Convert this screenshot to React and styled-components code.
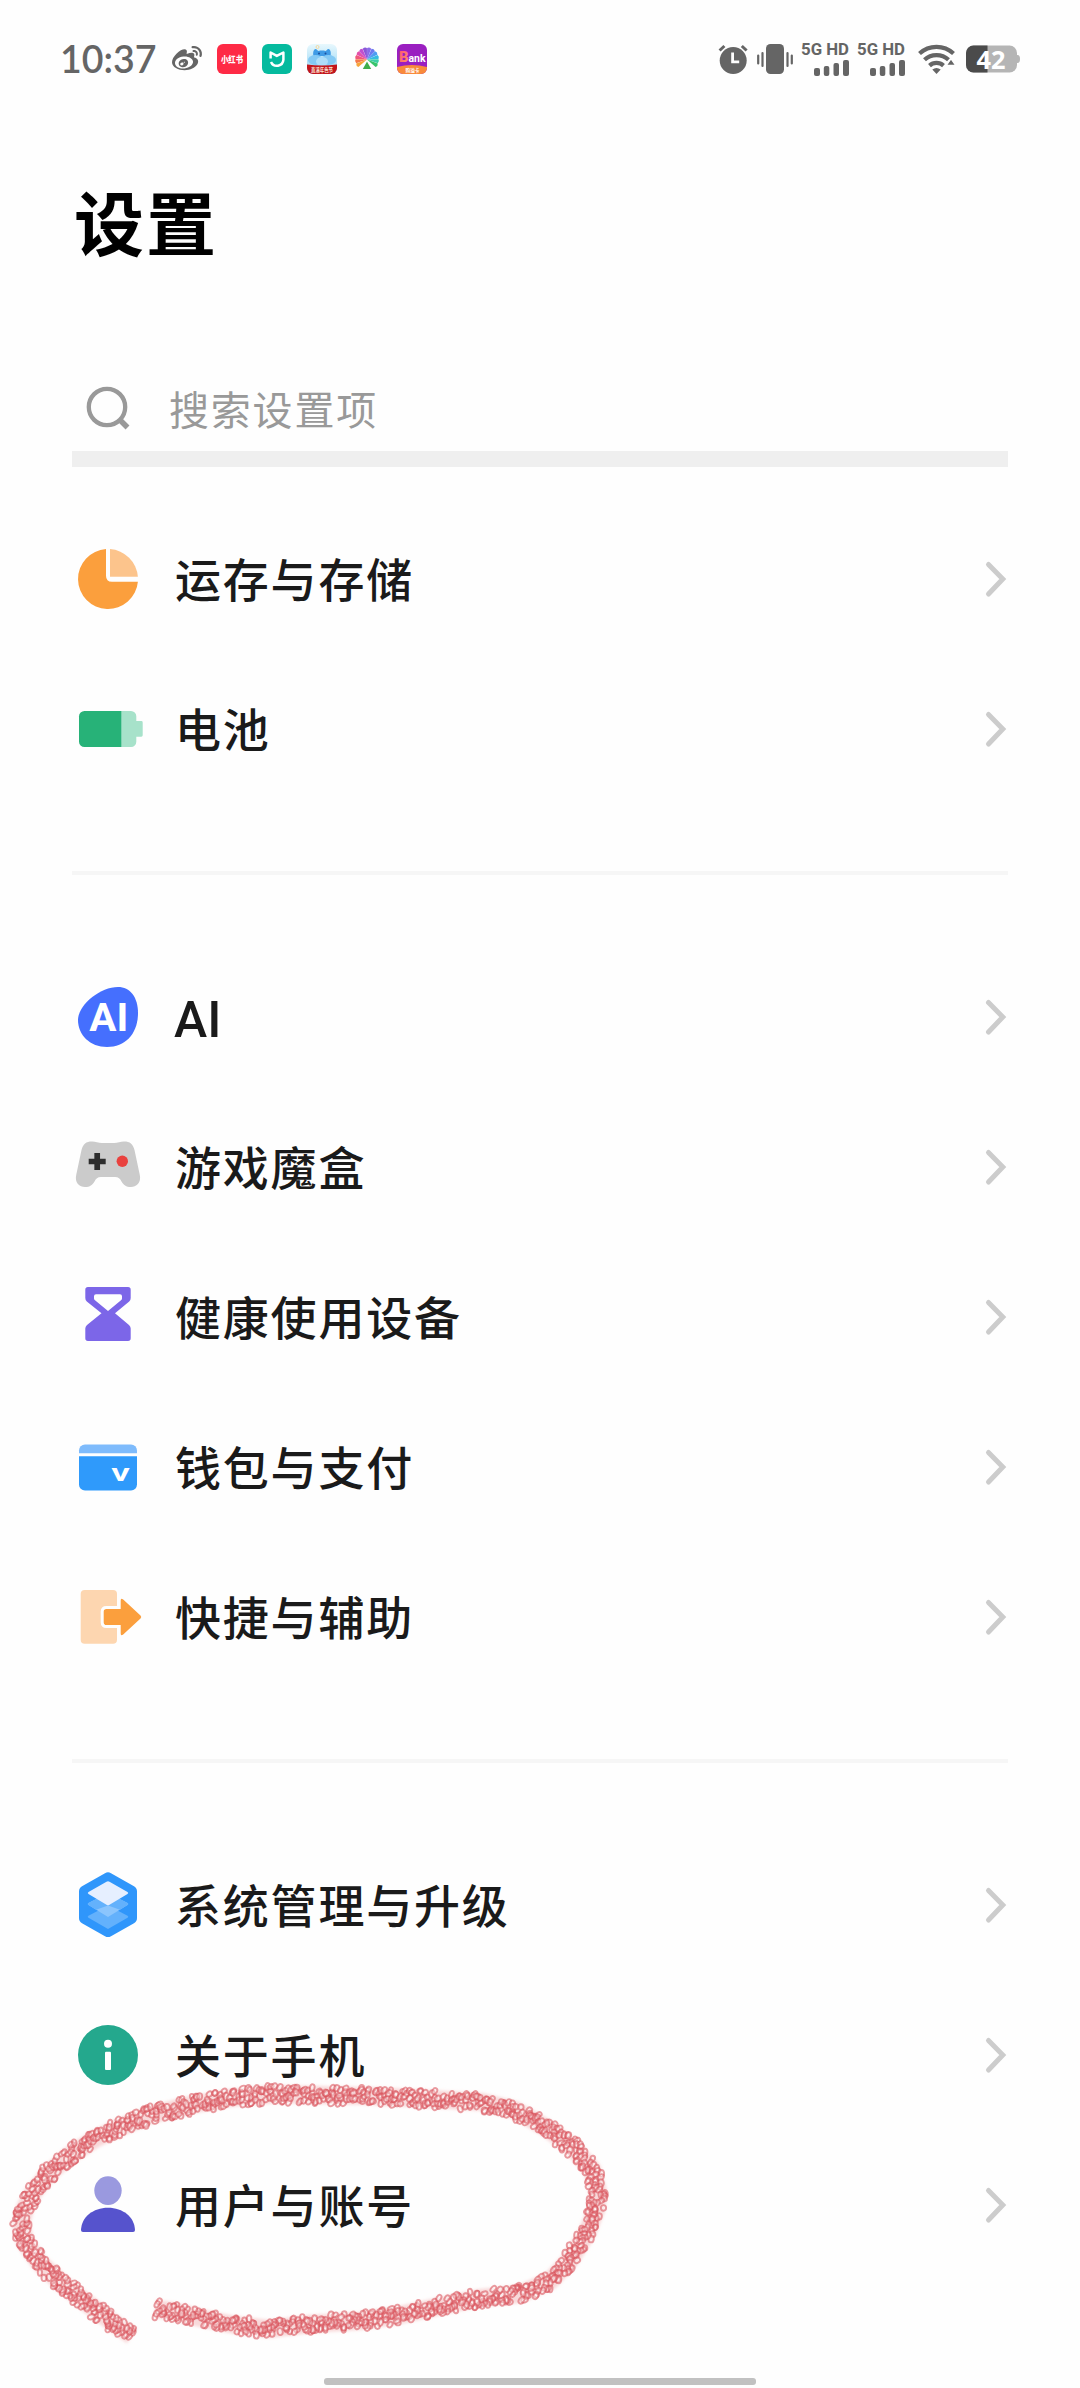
import React from 'react'
import styled, { createGlobalStyle } from 'styled-components';
import { FaWeibo } from 'react-icons/fa';

const GlobalStyle = createGlobalStyle`
  * {
    box-sizing: border-box;
  }
  body {
    margin: 0;
    background: #fefefe;
    font-family: "Noto Sans CJK SC", "Noto Sans", sans-serif;
  }
`;

/* ---------- status bar icons ---------- */

const RedNoteIcon = () => (
  <svg width="30" height="30" viewBox="0 0 30 30">
    <rect width="30" height="30" rx="6" fill="#fe2a45" />
    <text x="4" y="18.6" fontSize="8.6" fontWeight="900" fill="#fff" textLength="22" lengthAdjust="spacingAndGlyphs">小红书</text>
  </svg>
)

const MiHomeIcon = () => (
  <svg width="30" height="30" viewBox="0 0 30 30">
    <rect width="30" height="30" rx="6" fill="#05ba9e" />
    <path d="M8.600 14.500V8.500l6.200 3.400 6.600-3.400v7.200a6.500 6.500 0 0 1-12.400 2.300" fill="none" stroke="#fff" strokeWidth="2.500" strokeLinejoin="round" />
  </svg>
)

const FestivalIcon = () => (
  <svg width="30" height="30" viewBox="0 0 30 30">
    <defs>
      <linearGradient id="sky" x1="0" y1="0" x2="0" y2="1">
        <stop offset="0" stopColor="#e8f8fd" />
        <stop offset="1" stopColor="#8fd2f3" />
      </linearGradient>
      <clipPath id="festivalClip"><rect width="30" height="30" rx="6" /></clipPath>
    </defs>
    <g clipPath="url(#festivalClip)">
      <rect width="30" height="30" fill="url(#sky)" />
      <circle cx="10.5" cy="3" r="1.5" fill="none" stroke="#f3d9a0" />
      <path d="M6.500 12c-1-4 .5-7 2-7s1.500 1.500 3 2c2-.6 5-.6 7 0 1.500-.5 1.500-2 3-2s3 3 2 7z" fill="#3f9be6" />
      <circle cx="12" cy="9.500" r="1" fill="#1c4f9c" />
      <circle cx="18.500" cy="9.500" r="1" fill="#1c4f9c" />
      <ellipse cx="8.500" cy="16" rx="7.500" ry="5" fill="#84c9f4" />
      <ellipse cx="21.500" cy="16" rx="7.500" ry="5" fill="#84c9f4" />
      <ellipse cx="15" cy="17.500" rx="6" ry="4.500" fill="#aedef9" />
      <path d="M0 20.500q15 2 30 0V30H0z" fill="#c2151c" />
      <text x="4" y="28.200" fontSize="5.600" fontWeight="700" fill="#fbe3d6" textLength="22" lengthAdjust="spacingAndGlyphs">直溪年色节</text>
    </g>
  </svg>
)

const petals = ['#8a6be8', '#6c7af0', '#4d9df2', '#35bde0', '#3ccfa5', '#37c46a', '#8a57d8', '#c050cf', '#e34fa9', '#f0577c', '#f47a4a', '#f7a53b']

const FlowerIcon = () => (
  <svg width="30" height="30" viewBox="0 0 30 30">
    {petals.map((color, i) => {
      // six blades on the right half, six on the left
      const angle = i < 6 ? 11 + i * 22 : -11 - (i - 6) * 22
      return <path key={color} d="M15 15.500L12.900 4.200q2.100-1.600 4.200 0z" fill={color} transform={`rotate(${angle} 15 15.500)`} />
    })}
    <path d="M15 17.500l4.200 7.500h-8.400z" fill="#3fae49" />
  </svg>
)

const BankIcon = () => (
  <svg width="30" height="30" viewBox="0 0 30 30">
    <defs>
      <clipPath id="bankClip"><rect width="30" height="30" rx="6" /></clipPath>
      <linearGradient id="bankB" x1="0" y1="0" x2="1" y2="1">
        <stop offset="0" stopColor="#ff4f78" />
        <stop offset="1" stopColor="#ff9a5c" />
      </linearGradient>
    </defs>
    <g clipPath="url(#bankClip)">
      <rect width="30" height="30" fill="#9a1fc0" />
      <path d="M0 23q15-4 30 0v7H0z" fill="#f98a3a" />
      <text x="2" y="18" fontFamily="Roboto" fontSize="15.500" fontWeight="900" fill="url(#bankB)" textLength="9.500" lengthAdjust="spacingAndGlyphs">B</text>
      <text x="11.500" y="18" fontFamily="Roboto" fontSize="11.500" fontWeight="700" fill="#fff" textLength="17" lengthAdjust="spacingAndGlyphs">ank</text>
      <text x="8.500" y="28" fontSize="5" fontWeight="700" fill="#fff" textLength="14" lengthAdjust="spacingAndGlyphs">购溢卡</text>
    </g>
  </svg>
)

const AlarmIcon = () => (
  <svg width="30" height="30" viewBox="0 0 30 30">
    <circle cx="15.200" cy="16.500" r="13.500" fill="#656565" />
    <path d="M1.600 6.500L6.400 2M28.600 6.500L23.800 2" stroke="#656565" strokeWidth="3" />
    <path d="M14.600 8.500v9.400h6.600" fill="none" stroke="#fefefe" strokeWidth="2.800" />
  </svg>
)

const VibrateIcon = () => (
  <svg width="36" height="30" viewBox="0 0 36 30">
    <rect x="9" y="0" width="18" height="30" rx="4.500" fill="#656565" />
    <path d="M1.200 11.500v8M5.500 9v13M30.500 9v13M34.800 11.500v8" stroke="#656565" strokeWidth="2.200" strokeLinecap="round" />
  </svg>
)

const BarsIcon = () => (
  <svg width="35" height="16" viewBox="0 0 35 16" fill="#656565">
    <rect x="0" y="8" width="6" height="8" rx="2" />
    <rect x="9.800" y="6" width="5.500" height="10" rx="2" />
    <rect x="19.500" y="3" width="5.500" height="13" rx="2" />
    <rect x="29" y="0" width="6" height="16" rx="2" />
  </svg>
)

const WifiIcon = () => (
  <svg className="wifi" width="37" height="30" viewBox="0 0 37 30">
    <g fill="none" stroke="#656565" strokeWidth="4.200">
      <path d="M1.500 9.500a25 25 0 0 1 34 0" />
      <path d="M6.500 15.800a17.500 17.500 0 0 1 24 0" />
      <path d="M11.500 21.600a10.500 10.500 0 0 1 14 0" />
    </g>
    <path d="M14.300 25.600q4.200-3 8.400 0L18.500 30z" fill="#656565" />
    <path d="M33 14.500l5 7H28z" fill="#656565" stroke="#fefefe" strokeWidth="1.500" />
  </svg>
)

const BatteryIcon = () => (
  <svg className="battery" width="54" height="28" viewBox="0 0 54 28">
    <defs>
      <clipPath id="batteryClip"><rect width="51" height="27" y=".5" rx="7.500" /></clipPath>
    </defs>
    <path d="M50 10h1.500q2.500 0 2.500 4t-2.500 4H50z" fill="#b5b5b5" />
    <g clipPath="url(#batteryClip)">
      <rect width="51" height="28" fill="#b5b5b5" />
      <rect width="21.500" height="28" fill="#4b4b4b" />
    </g>
    <text x="10.500" y="23.500" fontFamily="Noto Sans" fontSize="25" fontWeight="700" fill="#fff" textLength="29" lengthAdjust="spacingAndGlyphs">42</text>
  </svg>
)

/* ---------- settings icons, all on a 72px grid ---------- */

const StorageIcon = () => (
  <>
    <path d="M34 6.070A30 30 0 1 0 65.900 38.700H40q-6 0-6-6z" fill="#fb9f3d" />
    <path d="M38 6.070A30 30 0 0 1 65.900 33.700H38z" fill="#fcc48c" />
  </>
)

const PowerIcon = () => (
  <>
    <path d="M49 18h10a5.300 5.300 0 0 1 5.300 5.300V28h5q1.400 0 1.400 1.400v12.900q0 1.400-1.400 1.400h-5v5A5.300 5.300 0 0 1 59 54H49z" fill="#a7e2ca" />
    <path d="M49.300 18H12.500A5.500 5.500 0 0 0 7 23.500v25a5.500 5.500 0 0 0 5.500 5.500h36.800z" fill="#27b278" />
  </>
)

const AiIcon = () => (
  <>
    <path d="M46 6C58 6 66 16 66 32 66 52 54 66 35 66 18 66 6 54 6 39 6 24 28 6 46 6z" fill="#456ffe" />
    <text x="17.300" y="50" fontFamily="Roboto" fontSize="39.500" fontWeight="700" fill="#fff" textLength="39" lengthAdjust="spacingAndGlyphs">AI</text>
  </>
)

const GameIcon = () => (
  <>
    <path
      d="M20 10.500C24 10.500 26 12 30 12H42C46 12 48 10.500 52 10.500 58 10.500 61 13 62.500 19L67.800 44C69.500 52 64 56 59 56 54 56 51.500 54 49.500 50.500 48 47.500 46.500 46 43 46H29C25.500 46 24 47.500 22.500 50.500 20.500 54 18 56 13 56 7.500 56 2.500 52 4.200 44L9.500 19C11 13 14 10.500 20 10.500z"
      fill="#cbcbcb"
    />
    <path d="M25.200 22v17M16.700 30.500h17" stroke="#2d2d2d" strokeWidth="5.700" />
    <circle cx="50.300" cy="30.300" r="5.700" fill="#e9413e" />
  </>
)

const HourglassIcon = () => (
  <path
    fillRule="evenodd"
    d="M16 6h40q2.700 0 2.700 2.700V17q0 2-1.500 3.500L43 32.300 57 44q1.700 1.500 1.700 3.500V57.300q0 2.700-2.700 2.700H16q-2.700 0-2.700-2.700V47.500q0-2 1.700-3.500L29.500 32.300 14.800 20.500Q13.300 19 13.300 17V8.700Q13.300 6 16 6zM24 13.300q-2 0-2 2v2.200q0 1 1 1.800L36 30l13-10.700q1-.8 1-1.800v-2.200q0-2-2-2z"
    fill="#7c66e8"
  />
)

const WalletIcon = () => (
  <>
    <path d="M7 22.300V19.500A6 6 0 0 1 13 13.500H59a6 6 0 0 1 6 6V22.300z" fill="#7ebbfc" />
    <path d="M7 25.300H65V53.500a6 6 0 0 1-6 6H13a6 6 0 0 1-6-6z" fill="#2f9afb" />
    <text x="39.500" y="49.500" fontFamily="Noto Sans" fontSize="23" fontWeight="700" fill="#fff" textLength="18" lengthAdjust="spacingAndGlyphs">v</text>
  </>
)

const ShortcutIcon = () => (
  <>
    <rect x="8.700" y="9" width="36.300" height="53.700" rx="4" fill="#fdd6b0" />
    <path
      d="M34.500 28H48.700V19.500q0-3 2.500-1L68.500 34.500q1.500 1.500 0 3L51.200 53.500q-2.500 2-2.500-1V44H34.500q-2.800 0-2.800-2.800V30.800q0-2.800 2.800-2.800z"
      fill="#fb9f3d" stroke="#fefefe" strokeWidth="6" paintOrder="stroke"
    />
  </>
)

const SystemIcon = () => (
  <>
    <path d="M33 4.200q3-1.700 6 0L62 17.300q3 1.700 3 5.200V49q0 3.500-3 5.200L39 67.200q-3 1.700-6 0L10 54.200Q7 52.500 7 49V22.500q0-3.500 3-5.200z" fill="#2f96fb" />
    <path d="M36 36.500L55.500 46.800q1.600 1 0 2L36 60 16.500 48.800q-1.600-1 0-2z" fill="#63b1fc" />
    <path d="M36 24L55.500 34q1.600 1 0 2L36 48 16.500 36q-1.600-1 0-2z" fill="#8bc5fd" />
    <path d="M16.500 36q-1.600-1 0-2L36 24l19.500 10q1.600 1 0 2L48 40.800 36 36.500 24 40.800z" fill="#63b1fc" />
    <path d="M34.500 12.800q1.500-1 3 0L55.500 23q1.500 1 0 2L37.500 35.800q-1.500 1-3 0L16.500 25q-1.500-1 0-2z" fill="#e6efff" />
  </>
)

const InfoIcon = () => (
  <>
    <circle cx="36" cy="36" r="30" fill="#24a88d" />
    <circle cx="36" cy="24.700" r="4" fill="#fff" />
    <rect x="33" y="32.700" width="6" height="18.300" rx="1" fill="#fff" />
  </>
)

const UserIcon = () => (
  <>
    <ellipse cx="36" cy="21.600" rx="13.700" ry="14.300" fill="#9a99df" />
    <path d="M11 63q-2 0-2-2C9.500 48 21 38.700 36 38.700S62.500 48 63 61q0 2-2 2z" fill="#5653cd" />
  </>
)

const groups = [
  [
    { label: '运存与存储', Icon: StorageIcon },
    { label: '电池', Icon: PowerIcon },
  ],
  [
    { label: 'AI', Icon: AiIcon, latin: true },
    { label: '游戏魔盒', Icon: GameIcon },
    { label: '健康使用设备', Icon: HourglassIcon },
    { label: '钱包与支付', Icon: WalletIcon },
    { label: '快捷与辅助', Icon: ShortcutIcon },
  ],
  [
    { label: '系统管理与升级', Icon: SystemIcon },
    { label: '关于手机', Icon: InfoIcon },
    { label: '用户与账号', Icon: UserIcon },
  ],
]

/* ---------- hand drawn loop around the last row ---------- */

const loop = [
  [132, 2336], [105, 2317], [80, 2298], [60, 2282], [38, 2261], [25, 2242], [21, 2224],
  [25, 2208], [33, 2193], [48, 2174], [70, 2155], [95, 2139], [118, 2128], [150, 2115],
  [190, 2105], [230, 2098], [275, 2094], [320, 2095], [370, 2096], [430, 2099], [482, 2102],
  [515, 2110], [545, 2127], [572, 2147], [592, 2169], [598, 2192], [596, 2210], [587, 2233],
  [570, 2260], [550, 2281], [520, 2294], [480, 2298], [450, 2304], [400, 2315], [360, 2321],
  [310, 2324], [270, 2329], [235, 2325], [200, 2318], [172, 2311], [155, 2309],
]

function makeBeads() {
  // seeded, so the stroke looks the same on every render
  let seed = 2024
  const rand = () => {
    seed = (seed + 0x6d2b79f5) | 0
    let t = Math.imul(seed ^ (seed >>> 15), 1 | seed)
    t = (t + Math.imul(t ^ (t >>> 7), 61 | t)) ^ t
    return ((t ^ (t >>> 14)) >>> 0) / 4294967296
  }
  const beads = []
  for (let i = 0; i < loop.length - 1; i++) {
    const [x1, y1] = loop[i]
    const [x2, y2] = loop[i + 1]
    const length = Math.hypot(x2 - x1, y2 - y1)
    const nx = -(y2 - y1) / length
    const ny = (x2 - x1) / length
    const count = Math.round(length / 1.1)
    for (let k = 0; k < count; k++) {
      const t = (k + rand() * 4 - 2) / count
      const off = (rand() - 0.5) * 16.5
      beads.push({
        x: (x1 + (x2 - x1) * t + nx * off).toFixed(1),
        y: (y1 + (y2 - y1) * t + ny * off).toFixed(1),
        rx: (2.1 + rand() * 0.6).toFixed(1),
        ry: (2.7 + rand() * 1).toFixed(1),
        turn: Math.round(rand() * 90 - 20),
      })
    }
  }
  return beads
}

const beads = makeBeads()

const LoopMark = () => (
  <Overlay width="660" height="330" viewBox="0 2050 660 330">
    <defs>
      <filter id="glow"><feGaussianBlur stdDeviation="1.500" /></filter>
      <filter id="soften"><feGaussianBlur stdDeviation=".6" /></filter>
    </defs>
    <polyline points={loop.join(' ')} fill="none" stroke="#f0a3a6" strokeOpacity=".4" strokeWidth="18" strokeLinejoin="round" filter="url(#glow)" />
    <g filter="url(#soften)">
      {beads.map((b, i) => (
        <ellipse
          key={i} cx={b.x} cy={b.y} rx={b.rx} ry={b.ry}
          transform={`rotate(${b.turn} ${b.x} ${b.y})`}
          fill="#fff" fillOpacity=".4" stroke="#d9525b" strokeOpacity=".58" strokeWidth="1.900"
        />
      ))}
    </g>
  </Overlay>
)

const App = () => {
  return (
    <Page>
      <GlobalStyle />
      <StatusBar>
        <div className="left">
          <Clock>10:37</Clock>
          <FaWeibo size={30} color="#656565" />
          <RedNoteIcon />
          <MiHomeIcon />
          <FestivalIcon />
          <FlowerIcon />
          <BankIcon />
        </div>
        <div className="right">
          <AlarmIcon />
          <VibrateIcon />
          <Signal><span>5G HD</span><BarsIcon /></Signal>
          <Signal><span>5G HD</span><BarsIcon /></Signal>
          <WifiIcon />
          <BatteryIcon />
        </div>
      </StatusBar>

      <Title>设置</Title>

      <SearchBox>
        <svg width="72" height="72" viewBox="0 0 72 72" fill="none" stroke="#999">
          <circle cx="35" cy="34" r="18.200" strokeWidth="4.300" />
          <path d="M47.500 46.500l8 8" strokeWidth="5.500" />
        </svg>
        <span>搜索设置项</span>
      </SearchBox>

      <List>
        {groups.map((rows, i) => (
          <Group key={i}>
            {rows.map(({ label, Icon, latin }) => (
              <Row key={label}>
                <svg width="72" height="72" viewBox="0 0 72 72"><Icon /></svg>
                <Label $latin={latin}>{label}</Label>
                <svg width="24" height="40" viewBox="0 0 24 40">
                  <path d="M4.500 5.500L18.800 20 4.500 35" fill="none" stroke="#ccc" strokeWidth="5" strokeLinecap="round" />
                </svg>
              </Row>
            ))}
          </Group>
        ))}
      </List>

      <HomeIndicator />
      <LoopMark />
    </Page>
  )
}

const Page = styled.div`
  position: relative;
  display: flex;
  flex-direction: column;
  width: 1080px;
  height: 2388px;
  padding: 0 72px;
  overflow: hidden;
  background: #fefefe;
`;

const StatusBar = styled.div`
  display: flex;
  justify-content: space-between;
  height: 118px;
  margin: 0 -12px;

  .left, .right {
    display: flex;
    align-items: center;
  }

  .left {
    gap: 15px;
  }

  .right {
    gap: 9px;
  }

  svg {
    overflow: visible;
  }

  .wifi {
    margin-left: 4px;
  }

  .battery {
    margin-left: 2px;
  }
`;

const Clock = styled.span`
  width: 97px;
  padding-bottom: 1px;
  color: #656565;
  font-family: Lato, sans-serif;
  font-size: 37.500px;
  font-weight: 600;
  line-height: 44px;
  white-space: nowrap;
`;

const Signal = styled.div`
  display: flex;
  flex-direction: column;
  align-items: flex-end;
  gap: 5px;
  width: 47px;
  color: #656565;
  font-family: Roboto, sans-serif;
  font-size: 16.800px;
  font-weight: 700;
  line-height: 12px;
  white-space: nowrap;
`;

const Title = styled.h1`
  height: 100px;
  margin: 53px 0 0 2px;
  font-size: 70px;
  font-weight: 700;
  line-height: 100px;
  letter-spacing: 2px;
  color: #000;
`;

const SearchBox = styled.div`
  display: flex;
  align-items: center;
  height: 100px;
  margin-top: 96px;
  border-bottom: 16px solid #efefef;

  span {
    margin-left: 25px;
    padding-bottom: 3px;
    font-size: 40px;
    line-height: 60px;
    letter-spacing: 1.800px;
    color: #999;
  }
`;

const List = styled.div`
  margin-top: 37px;
`;

const Group = styled.div`
  & + & {
    margin-top: 67px;
    padding-top: 67px;
    border-top: 4px solid #f6f6f6;
  }
`;

const Row = styled.div`
  display: flex;
  align-items: center;
  height: 150px;
`;

const Label = styled.span`
  flex: 1;
  margin-left: ${({ $latin }) => $latin ? '30px' : '31px'};
  padding: ${({ $latin }) => $latin ? '5px 0 0' : '0 0 4px'};
  color: #1a1a1a;
  font-family: ${({ $latin }) => $latin ? 'Roboto, sans-serif' : 'inherit'};
  font-size: ${({ $latin }) => $latin ? '50px' : '46px'};
  font-weight: 500;
  line-height: 68px;
  letter-spacing: ${({ $latin }) => $latin ? '0' : '1.800px'};
`;

const HomeIndicator = styled.div`
  align-self: center;
  width: 432px;
  height: 7px;
  margin-top: 98px;
  background: #c1c1c1;
  border-radius: 3px;
`;

const Overlay = styled.svg`
  position: absolute;
  left: 0;
  top: 2050px;
  pointer-events: none;
`;

export default App
